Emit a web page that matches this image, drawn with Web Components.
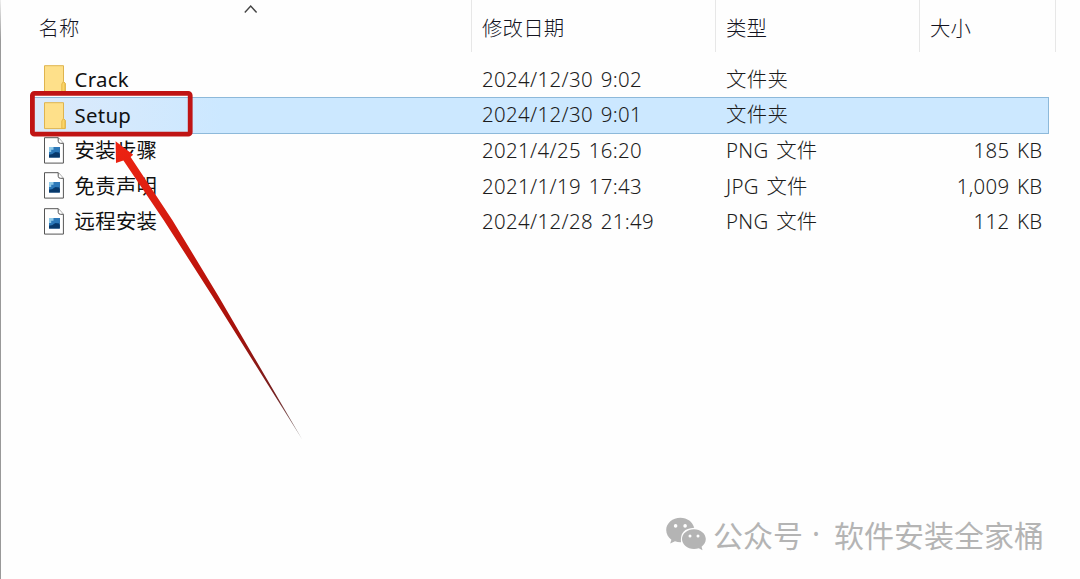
<!DOCTYPE html>
<html lang="zh-CN">
<head>
<meta charset="utf-8">
<title>文件列表</title>
<style>
  body {
    margin: 0;
    background: #fefefe;
    font-family: "Noto Sans", "Noto Sans CJK SC", sans-serif;
    font-size: 20.4px;
    font-weight: 300;
    color: #1c1c1c;
    overflow: hidden;
  }
</style>
</head>
<body>
<file-explorer>
  <file-header slot="header"></file-header>
  <file-row kind="folder" date="2024/12/30 9:02" type="文件夹">Crack</file-row>
  <file-row kind="folder" date="2024/12/30 9:01" type="文件夹" selected>Setup</file-row>
  <file-row kind="image" date="2021/4/25 16:20" type="PNG 文件" size="185 KB">安装步骤</file-row>
  <file-row kind="image" date="2021/1/19 17:43" type="JPG 文件" size="1,009 KB">免责声明</file-row>
  <file-row kind="image" date="2024/12/28 21:49" type="PNG 文件" size="112 KB">远程安装</file-row>
  <red-marker slot="overlay"></red-marker>
  <account-mark slot="overlay"><span>公众号</span><span>·</span><span>软件安装全家桶</span></account-mark>
</file-explorer>

<script>
// ファイル種別のアイコン
const icons = {
  folder: `
    <svg width="24" height="28" viewBox="0 0 24 28">
      <path d="M1.5 .7H20.5V16.5L22.3 18.5V26.6H1.5Z" fill="#fee08a" stroke="#dfb44e"/>
      <path d="M20.3 16.7L18.8 19V26.4H22V18.5Z" fill="#fbd568" stroke="#dfae3d" stroke-width=".8"/>
    </svg>`,
  image: `
    <svg width="24" height="28" viewBox="0 0 24 28">
      <path d="M1.5 .7H15.2L20.4 6.3V26.1H1.5Z" fill="#fff" stroke="#555"/>
      <path d="M15.2 .7V4.3Q15.4 6.3 17.4 6.3H20.4" fill="#fff" stroke="#555"/>
      <rect x="6" y="10" width="10.8" height="10.5" fill="#0c4f8e"/>
      <path d="M6 10H16.8V15.1H12.5Q10 15.7 9 17.5H6Z" fill="#2c78b8"/>
      <path d="M6 10H10.5V12.7H8.2V15H6Z" fill="#90cae8"/>
      <path d="M6 20.5V18L10 17L12.5 15.3L16.8 16.5V20.5Z" fill="#08396b"/>
    </svg>`,
};

class FileExplorer extends HTMLElement {
  constructor() {
    super();
    this.attachShadow({ mode: "open" });
    this.shadowRoot.innerHTML = `
      <style>
        :host {
          --columns: 472px 244px 204px 136px;
          display: block;
          position: relative;
          box-sizing: border-box;
          width: 1080px;
          height: 579px;
          overflow: hidden;
        }
        .edge {
          position: absolute;
          left: 0;
          top: 0;
          width: 1px;
          height: 100%;
          background: linear-gradient(#eee, #999 40px);
        }
        main { display: flex; flex-direction: column; }
      </style>
      <div class="edge"></div>
      <slot name="header"></slot>
      <main><slot></slot></main>
      <slot name="overlay"></slot>
    `;
  }
}

class FileHeader extends HTMLElement {
  constructor() {
    super();
    this.attachShadow({ mode: "open" });
    this.shadowRoot.innerHTML = `
      <style>
        :host {
          display: grid;
          grid-template-columns: var(--columns);
          position: relative;
          height: 61.5px;
          align-items: start;
          color: #14141f;
          letter-spacing: .2px;
        }
        div {
          box-sizing: border-box;
          height: 52px;
          line-height: 56px;
          padding-left: 10px;
          border-right: 1px solid #e7e7e7;
        }
        div:first-of-type { padding-left: 38.5px; }
        svg { position: absolute; left: 243px; top: 4px; }
      </style>
      <div>名称</div>
      <div>修改日期</div>
      <div>类型</div>
      <div>大小</div>
      <svg width="16" height="11"><path d="M1.8 8.5L7.7 2L13.6 8.5" fill="none" stroke="#444" stroke-width="1.4"/></svg>
    `;
  }
}

class FileRow extends HTMLElement {
  constructor() {
    super();
    this.attachShadow({ mode: "open" });
  }

  connectedCallback() {
    this.shadowRoot.innerHTML = `
      <style>
        :host {
          display: grid;
          grid-template-columns: 439px 244px 204px 1fr;
          box-sizing: border-box;
          width: 1017px;
          height: 35.7px;
          margin-left: 32px;
          line-height: 35.7px;
          white-space: nowrap;
        }
        :host([selected]) {
          height: 36.7px;
          margin-bottom: -1px;
          background: linear-gradient(90deg, #dceafb, #cce8ff 190px);
          box-shadow: inset 0 0 0 1px #8db9da;
        }
        .name {
          display: flex;
          align-items: center;
          gap: 7.5px;
          padding-left: 11px;
          font-weight: 400;
          letter-spacing: .3px;
          color: #111;
        }
        .name svg { flex: none; }
        .cell { padding-left: 11px; letter-spacing: .3px; word-spacing: 2px; }
        .date { letter-spacing: .37px; }
        .size { padding: 0 6.5px 0 0; text-align: right; }
      </style>
      <div class="name">${icons[this.getAttribute("kind")]}<span><slot></slot></span></div>
      <div class="cell date">${this.getAttribute("date")}</div>
      <div class="cell">${this.getAttribute("type")}</div>
      <div class="cell size">${this.getAttribute("size") || ""}</div>
    `;
  }
}

// 選択行を囲む赤枠と矢印
class RedMarker extends HTMLElement {
  constructor() {
    super();
    this.attachShadow({ mode: "open" });
    this.shadowRoot.innerHTML = `
      <style>
        :host { position: absolute; left: 0; top: 0; }
        svg { display: block; }
      </style>
      <svg width="320" height="450">
        <defs>
          <linearGradient id="shaft" gradientUnits="userSpaceOnUse" x1="116" y1="142" x2="302" y2="440">
            <stop offset="0" stop-color="#ee2312"/>
            <stop offset=".22" stop-color="#da1d10"/>
            <stop offset=".4" stop-color="#c4150c"/>
            <stop offset=".65" stop-color="#a3120c"/>
            <stop offset=".85" stop-color="#752020"/>
            <stop offset="1" stop-color="#888"/>
          </linearGradient>
        </defs>
        <rect x="32.4" y="93.4" width="157.8" height="40.8" rx="2" fill="none" stroke="#c01414" stroke-width="4.8"/>
        <path d="M115.6 141.3L133.2 154.8L130.6 157L172.3 220L218.8 296.7L302.4 439.8L212.8 296.7L163.6 220L123.4 160.5L116 163Z" fill="url(#shaft)"/>
      </svg>
    `;
  }
}

class AccountMark extends HTMLElement {
  constructor() {
    super();
    this.attachShadow({ mode: "open" });
    this.shadowRoot.innerHTML = `
      <style>
        :host {
          position: absolute;
          left: 665px;
          top: 512px;
          display: flex;
          align-items: center;
          height: 44px;
          font: 400 30px/44px "Noto Sans CJK SC", sans-serif;
          color: #b4b4b4;
          white-space: nowrap;
        }
        svg { flex: none; margin-right: 6px; }
        ::slotted(span:nth-child(2)) {
          width: 31px;
          font-family: "Noto Sans", sans-serif;
          text-align: center;
          text-indent: -5px;
        }
      </style>
      <svg width="42" height="36" viewBox="0 0 42 36">
        <path fill="#b4b4b4" d="M15.4 1.8C7.6 1.8 1.2 7.2 1.2 14.1C1.2 18 3.2 21.4 6.4 23.7L5.2 27.6L10 25.3Q12.8 26.4 16 26.3Q14.5 12.5 29.2 11.8C27.7 6 22.3 1.8 15.4 1.8Z"/>
        <path fill="#b4b4b4" d="M29 13.2C22.3 13.2 17 17.6 17 23.1C17 28.6 22.3 33 29 33Q31.5 33 33.8 32.2L37.5 34.2L36.6 30.7C39.2 28.9 40.8 26.2 40.8 23.1C40.8 17.6 35.5 13.2 29 13.2Z"/>
        <g fill="#fff">
          <circle cx="10.6" cy="9.9" r="1.8"/>
          <circle cx="20.1" cy="9.9" r="1.8"/>
          <circle cx="25" cy="19.9" r="1.5"/>
          <circle cx="33" cy="19.9" r="1.5"/>
        </g>
      </svg>
      <slot></slot>
    `;
  }
}

customElements.define("file-explorer", FileExplorer);
customElements.define("file-header", FileHeader);
customElements.define("file-row", FileRow);
customElements.define("red-marker", RedMarker);
customElements.define("account-mark", AccountMark);
</script>
</body>
</html>
